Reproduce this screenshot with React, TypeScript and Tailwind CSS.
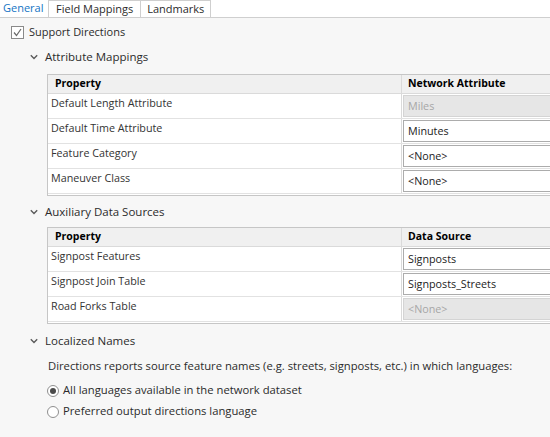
import React from "react";

type Row = { label: string; value: string; disabled?: boolean };

const attributeRows: Row[] = [
  { label: "Default Length Attribute", value: "Miles", disabled: true },
  { label: "Default Time Attribute", value: "Minutes" },
  { label: "Feature Category", value: "<None>" },
  { label: "Maneuver Class", value: "<None>" },
];

const sourceRows: Row[] = [
  { label: "Signpost Features", value: "Signposts" },
  { label: "Signpost Join Table", value: "Signposts_Streets" },
  { label: "Road Forks Table", value: "<None>", disabled: true },
];

function Chevron() {
  return (
    <svg width="8" height="6" viewBox="0 0 8 6" className="shrink-0">
      <polyline points="0.8,1.2 4,4.4 7.2,1.2" fill="none" stroke="#5a5a5a" strokeWidth="1.4" />
    </svg>
  );
}

function SectionHeader({ title }: { title: string }) {
  return (
    <div className="flex h-[20px] items-center gap-[7px] pl-[30px] text-[11.5px] text-[#2b2b2b]">
      <Chevron />
      <span>{title}</span>
    </div>
  );
}

function PropertyTable({ valueHeader, rows }: { valueHeader: string; rows: Row[] }) {
  return (
    <div className="ml-[47px] w-[560px] border border-[#c6c6c6] bg-white pb-[1px]">
      <div className="grid h-[19px] grid-cols-[354px_1fr] border-b border-[#dadada] bg-[#f0f0f0] text-[10.5px] font-bold text-black">
        <div className="flex items-center border-r border-[#dadada] pl-[7px]">Property</div>
        <div className="flex items-center pl-[6px]">{valueHeader}</div>
      </div>
      {rows.map((r) => (
        <div
          key={r.label}
          className="grid h-[25px] grid-cols-[354px_1fr] border-b border-[#e2e2e2] text-[10.75px]"
        >
          <div className="border-r border-[#dadada] pl-[3px] pt-[1px] leading-[16px] text-[#333]">
            {r.label}
          </div>
          <div className="pl-[1px] pt-[1px]">
            {r.disabled ? (
              <div className="flex h-[22px] items-center border border-[#d4d4d4] bg-[#e6e6e6] pl-[4px] text-[#a6a6a6]">
                {r.value}
              </div>
            ) : (
              <div className="flex h-[22px] items-center border border-[#acacac] bg-white pl-[4px] text-[#222]">
                {r.value}
              </div>
            )}
          </div>
        </div>
      ))}
    </div>
  );
}

function Radio({ checked, label }: { checked?: boolean; label: string }) {
  return (
    <div className="flex h-[21px] items-center gap-[4px] pl-[47px] text-[11.25px] text-[#2b2b2b]">
      <span className="flex h-[12px] w-[12px] items-center justify-center rounded-full border border-[#8f8f8f] bg-white">
        {checked && <span className="h-[6px] w-[6px] rounded-full bg-[#4a4a4a]" />}
      </span>
      <span>{label}</span>
    </div>
  );
}

export default function App() {
  return (
    <div
      className="h-[437px] w-[550px] overflow-hidden bg-[#f7f7f7]"
      style={{ fontFamily: '"Open Sans", "Noto Sans", sans-serif' }}
    >
      <div className="flex h-[18px] items-end border-b border-[#cfcfcf] bg-white text-[11px]">
        <div className="flex h-[18px] w-[48px] items-center pl-[3px] text-[#1474c4]">General</div>
        <div className="flex h-[17px] items-center border border-b-0 border-[#cfcfcf] px-[7px] text-[#2b2b2b]">
          Field Mappings
        </div>
        <div className="flex h-[17px] items-center border border-b-0 border-l-0 border-[#cfcfcf] px-[6px] text-[#2b2b2b]">
          Landmarks
        </div>
      </div>

      <div className="flex h-[28px] items-center gap-[5px] pl-[11px] text-[11px] text-[#2b2b2b]">
        <span className="flex h-[13px] w-[13px] items-center justify-center border border-[#8a8a8a] bg-white">
          <svg width="11" height="11" viewBox="0 0 11 11">
            <polyline points="2,5.5 4.5,8.5 9,2" fill="none" stroke="#6a6a6a" strokeWidth="1.2" />
          </svg>
        </span>
        <span>Support Directions</span>
      </div>

      <div className="mt-[1px]">
        <SectionHeader title="Attribute Mappings" />
      </div>
      <div className="mt-[7px]">
        <PropertyTable valueHeader="Network Attribute" rows={attributeRows} />
      </div>

      <div className="mt-[6px]">
        <SectionHeader title="Auxiliary Data Sources" />
      </div>
      <div className="mt-[5px]">
        <PropertyTable valueHeader="Data Source" rows={sourceRows} />
      </div>

      <div className="mt-[7px]">
        <SectionHeader title="Localized Names" />
      </div>
      <div className="mt-[7px] pl-[48px] text-[11.25px] leading-[16px] text-[#2b2b2b]">
        Directions reports source feature names (e.g. streets, signposts, etc.) in which languages:
      </div>
      <div className="mt-[6px] flex flex-col">
        <Radio checked label="All languages available in the network dataset" />
        <Radio label="Preferred output directions language" />
      </div>
    </div>
  );
}
